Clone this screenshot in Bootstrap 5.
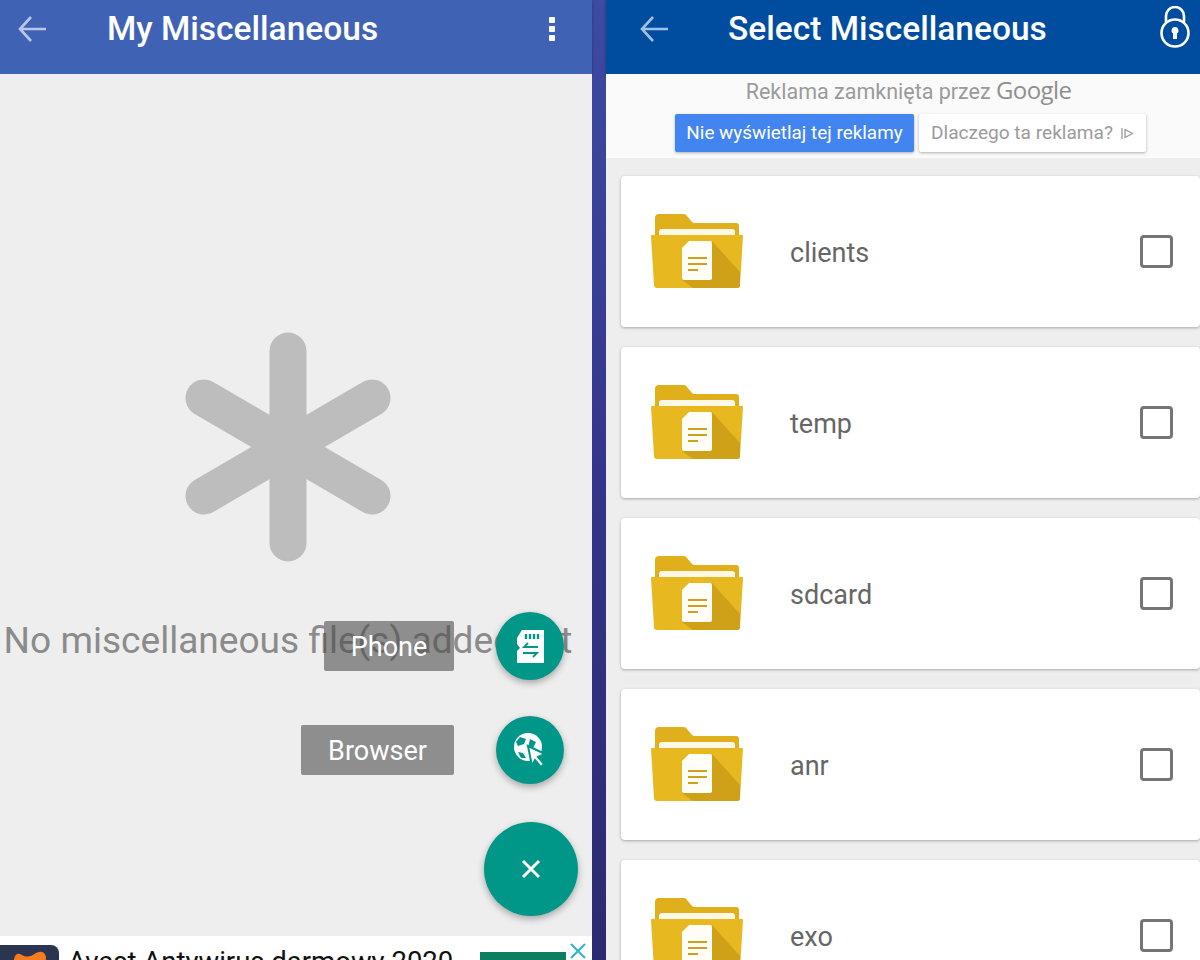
<!DOCTYPE html>
<html lang="en">
  <head>
    <meta charset="UTF-8" />
    <title>My Miscellaneous</title>
    <link href="https://cdn.jsdelivr.net/npm/bootstrap@5.3.2/dist/css/bootstrap.min.css" rel="stylesheet" />
    <style>
      body {
        height: 960px;
        overflow: hidden;
        background: #eee;
        font-family: Roboto, "Liberation Sans", sans-serif;
      }
      .left-pane { width: 592px; height: 960px; }
      .split-bar {
        width: 14px;
        height: 960px;
        background: linear-gradient(#3d4ba3, #34358a 50%, #2b2a70);
      }
      .right-pane { width: 594px; height: 960px; }
      .top-bar {
        height: 74px;
        padding-bottom: 16px;
        flex-shrink: 0;
        color: #fff;
        font-weight: 500;
        font-size: 33.5px;
        box-shadow: 0 1px 3px rgba(0, 0, 0, 0.3);
      }
      .top-bar-left { background: #4062b5; }
      .top-bar-right { background: #004d9f; }
      .back-arrow { margin-left: 18px; margin-right: 61px; }
      .top-bar-right .back-arrow { margin-left: 34px; margin-right: 60px; }
      .menu-dots { margin-right: 36px; }
      .lock-icon { margin-right: 9px; margin-top: 6px; }
      .empty-area { background: #eee; padding-right: 16px; }
      .star-icon { margin-top: 258px; }
      .empty-text {
        margin-top: 57px;
        font-size: 37.1px;
        line-height: 44px;
        color: #8b8b8b;
        white-space: nowrap;
      }
      .fab-stack { right: 14px; bottom: 44px; }
      .fab-row { padding-right: 14px; gap: 42px; margin-bottom: 36px; }
      .fab-label {
        height: 50px;
        font-size: 27px;
        line-height: 52px;
        color: #fff;
        text-align: center;
        background: rgba(78, 78, 78, 0.6);
        border-radius: 2px;
      }
      .label-phone { width: 130px; }
      .label-browser { width: 153px; }
      .fab-btn {
        background: #009688;
        box-shadow: 0 3px 7px rgba(0, 0, 0, 0.3);
      }
      .fab-small { width: 68px; height: 68px; }
      .fab-main { width: 94px; height: 94px; margin-top: 2px; }
      .bottom-ad { height: 24px; flex-shrink: 0; overflow: hidden; background: #fff; }
      .ad-logo {
        width: 59px;
        height: 40px;
        margin-top: 9px;
        background: #2b3550;
        border-radius: 0 8px 0 0;
      }
      .ad-title {
        margin-left: 9px;
        margin-top: 10px;
        font-size: 27.5px;
        line-height: 32px;
        color: #111;
        white-space: nowrap;
      }
      .ad-install {
        width: 86px;
        height: 30px;
        margin-left: 27px;
        margin-top: 16px;
        background: #0b7f5f;
      }
      .ad-close { margin-left: 4px; margin-top: 7px; }
      .ad-band { height: 84px; padding-left: 11px; flex-shrink: 0; background: #fafafa; }
      .ad-closed {
        margin-top: -2px;
        margin-bottom: 6px;
        height: 36px;
        font-size: 21.5px;
        line-height: 36px;
        color: #9a9a9a;
        white-space: nowrap;
      }
      .google-word { font-family: "Open Sans", sans-serif; font-size: 24px; color: #8f8f8f; letter-spacing: -0.6px; }
      .ad-buttons { gap: 5px; margin-left: 4px; }
      .ad-btn {
        height: 38px;
        font-size: 18.9px;
        line-height: 38px;
        border-radius: 2px;
        box-shadow: 0 1px 3px rgba(0, 0, 0, 0.3);
        white-space: nowrap;
      }
      .ad-btn-blue { width: 239px; background: #4285f0; color: #fff; }
      .ad-btn-white { width: 227px; background: #fff; color: #9b9b9b; font-size: 19.1px; }
      .folder-list { padding: 18px 0 0 15px; gap: 20px; min-height: 0; }
      .folder-card {
        width: 579px;
        height: 151px;
        flex-shrink: 0;
        border: 0;
        border-radius: 4px;
        box-shadow: 0 1px 3px rgba(0, 0, 0, 0.3);
      }
      .folder-icon { margin-left: 30px; margin-right: 47px; }
      .folder-name { padding-top: 4px; font-size: 27px; color: #666; }
      .pick-box {
        width: 33px;
        height: 33px;
        margin: 0 27px 0 auto;
        border: 3px solid #757575;
        border-radius: 5px;
        background-color: transparent;
      }
    </style>
  </head>
  <body>
    <svg width="0" height="0" class="d-block">
      <symbol id="folder" viewBox="0 0 92 75">
        <path d="M4 4q0-4 4-4H33q2 0 3 2l5 6q1 1 3 1H85q3 0 3 3V21H4z" fill="#e0af1c" />
        <path d="M8 21V18q0-3 3-3H81q3 0 3 3V21z" fill="#fff8e6" />
        <path d="M1 21H91q1 0 1 1L89 71q0 3-3 3H6q-3 0-3-3L0 22q0-1 1-1z" fill="#e8b820" />
        <path d="M61 27L89 58V71q0 3-3 3H42L31 66z" fill="#cfa119" />
        <path d="M38 27H59q2 0 2 2V64q0 2-2 2H33q-2 0-2-2V34z" fill="#fffdf5" />
        <path d="M37 44H56M37 50H56M37 56H47" stroke="#cfa119" stroke-width="2" fill="none" />
      </symbol>
    </svg>

    <div class="d-flex">
      <div class="left-pane d-flex flex-column position-relative">
        <div class="top-bar top-bar-left d-flex align-items-center">
          <svg class="back-arrow" width="28" height="26" viewBox="0 0 28 26" fill="none" stroke="#b9c6ea" stroke-width="2.6">
            <path d="M28 13H2M13 1L2 13L13 25" />
          </svg>
          <span>My Miscellaneous</span>
          <svg class="menu-dots ms-auto" width="8" height="26" viewBox="0 0 8 26" fill="#fff">
            <rect x="1" y="1" width="6" height="6" rx="1" />
            <rect x="1" y="10" width="6" height="6" rx="1" />
            <rect x="1" y="19" width="6" height="6" rx="1" />
          </svg>
        </div>

        <div class="empty-area flex-grow-1 d-flex flex-column align-items-center">
          <svg class="star-icon" width="206" height="230" viewBox="0 0 206 230" stroke="#bdbdbd" stroke-width="37" stroke-linecap="round">
            <path d="M103 19V211M19 66L187 164M187 66L19 164" />
          </svg>
          <div class="empty-text">No miscellaneous file(s) added yet</div>
        </div>

        <div class="fab-stack position-absolute d-flex flex-column align-items-end">
          <div class="fab-row d-flex align-items-center">
            <div class="fab-label label-phone">Phone</div>
            <div class="fab-btn fab-small rounded-circle d-flex align-items-center justify-content-center">
              <svg width="28" height="33" viewBox="0 0 28 33">
                <path d="M6 0H28V33H1V21L4 18L1 14V8z" fill="#fff" />
                <path d="M10 4V9M14 4V9M18 4V9M22 4V9" stroke="#009688" stroke-width="2.4" />
                <path d="M22 17H8L12 13M7 23H21L17 27" stroke="#009688" stroke-width="1.8" fill="none" />
              </svg>
            </div>
          </div>
          <div class="fab-row d-flex align-items-center">
            <div class="fab-label label-browser">Browser</div>
            <div class="fab-btn fab-small rounded-circle d-flex align-items-center justify-content-center">
              <svg width="32" height="34" viewBox="0 0 32 34">
                <circle cx="14" cy="14" r="14" fill="#fff" />
                <path d="M6 4L12 6L10 11L4 13L2 9zM16 6L22 9L19 15L17 20L14 15zM4 19L9 20L12 25L7 25z" fill="#009688" />
                <path d="M14 13L31 21L24 24L30 31L27 34L21 27L18 33z" fill="#fff" stroke="#009688" stroke-width="2" />
              </svg>
            </div>
          </div>
          <div class="fab-btn fab-main rounded-circle d-flex align-items-center justify-content-center">
            <svg width="20" height="20" viewBox="0 0 20 20" stroke="#fff" stroke-width="3">
              <path d="M2 2L18 18M18 2L2 18" />
            </svg>
          </div>
        </div>

        <div class="bottom-ad d-flex">
          <div class="ad-logo d-flex justify-content-center">
            <svg class="mt-1" width="36" height="30" viewBox="0 0 36 30">
              <path d="M2 10Q4 2 10 6Q16 10 24 4Q32 0 34 8Q34 20 26 28H8Q2 20 2 10z" fill="#f47b20" />
            </svg>
          </div>
          <div class="ad-title">Avast Antywirus darmowy 2020</div>
          <div class="ad-install"></div>
          <svg class="ad-close" width="16" height="16" viewBox="0 0 16 16" stroke="#2bb3cf" stroke-width="2">
            <path d="M1 1L15 15M15 1L1 15" />
          </svg>
        </div>
      </div>

      <div class="split-bar"></div>

      <div class="right-pane d-flex flex-column">
        <div class="top-bar top-bar-right d-flex align-items-center">
          <svg class="back-arrow" width="28" height="26" viewBox="0 0 28 26" fill="none" stroke="#9fc0e6" stroke-width="2.6">
            <path d="M28 13H2M13 1L2 13L13 25" />
          </svg>
          <span>Select Miscellaneous</span>
          <svg class="lock-icon ms-auto align-self-start" width="32" height="42" viewBox="0 0 32 42" fill="none" stroke="#fff" stroke-width="2.6">
            <path d="M7 16V10a9 9 0 0 1 18 0V16" />
            <circle cx="16" cy="27" r="13.5" />
            <path d="M16 21a3.5 3.5 0 0 1 2 6.4V33H14V27.4A3.5 3.5 0 0 1 16 21z" fill="#fff" stroke="none" />
          </svg>
        </div>

        <div class="ad-band d-flex flex-column align-items-center">
          <div class="ad-closed">Reklama zamknięta przez <span class="google-word">Google</span></div>
          <div class="ad-buttons d-flex">
            <div class="ad-btn ad-btn-blue text-center">Nie wyświetlaj tej reklamy</div>
            <div class="ad-btn ad-btn-white d-flex align-items-center justify-content-center gap-2">
              Dlaczego ta reklama?
              <svg width="13" height="13" viewBox="0 0 13 13" fill="none" stroke="#9b9b9b" stroke-width="1.3">
                <path d="M1 1V12M4 2.5L11.5 6.5L4 10.5z" />
              </svg>
            </div>
          </div>
        </div>

        <div class="folder-list d-flex flex-column flex-grow-1 overflow-hidden">
          <div class="card folder-card flex-row align-items-center">
            <svg class="folder-icon" width="92" height="75"><use href="#folder" /></svg>
            <span class="folder-name">clients</span>
            <input class="form-check-input pick-box" type="checkbox" />
          </div>
          <div class="card folder-card flex-row align-items-center">
            <svg class="folder-icon" width="92" height="75"><use href="#folder" /></svg>
            <span class="folder-name">temp</span>
            <input class="form-check-input pick-box" type="checkbox" />
          </div>
          <div class="card folder-card flex-row align-items-center">
            <svg class="folder-icon" width="92" height="75"><use href="#folder" /></svg>
            <span class="folder-name">sdcard</span>
            <input class="form-check-input pick-box" type="checkbox" />
          </div>
          <div class="card folder-card flex-row align-items-center">
            <svg class="folder-icon" width="92" height="75"><use href="#folder" /></svg>
            <span class="folder-name">anr</span>
            <input class="form-check-input pick-box" type="checkbox" />
          </div>
          <div class="card folder-card flex-row align-items-center">
            <svg class="folder-icon" width="92" height="75"><use href="#folder" /></svg>
            <span class="folder-name">exo</span>
            <input class="form-check-input pick-box" type="checkbox" />
          </div>
        </div>
      </div>
    </div>

    <script src="https://cdn.jsdelivr.net/npm/bootstrap@5.3.2/dist/js/bootstrap.bundle.min.js"></script>
  </body>
</html>
